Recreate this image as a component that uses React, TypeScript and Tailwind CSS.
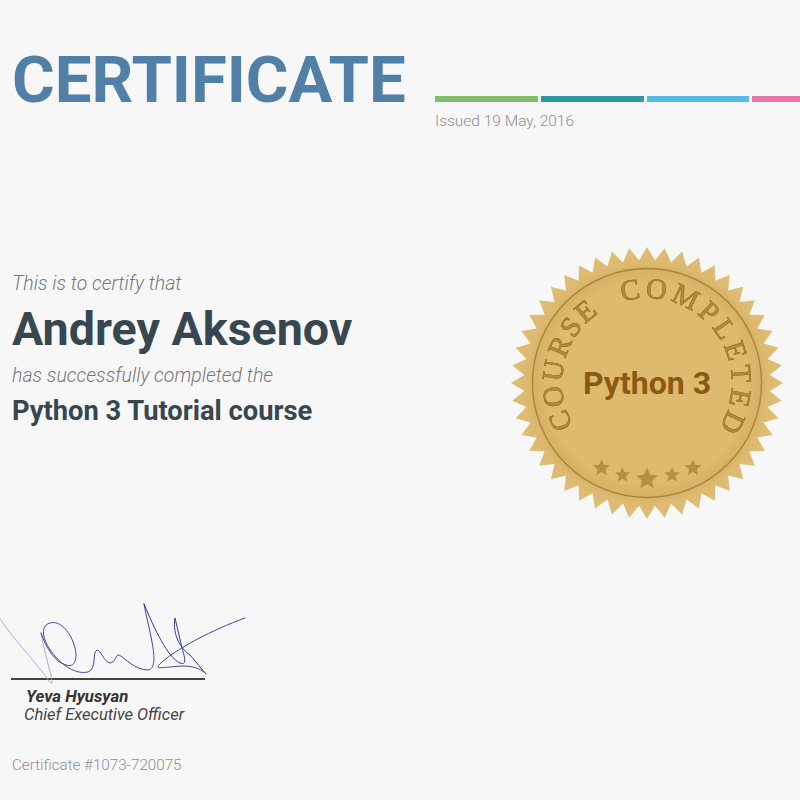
const sealPoints = () => {
  const teeth = 48;
  const pts: string[] = [];
  for (let i = 0; i < teeth * 2; i++) {
    const r = i % 2 === 0 ? 136 : 123;
    const a = (i * Math.PI) / teeth - Math.PI / 2;
    pts.push(`${(147 + r * Math.cos(a)).toFixed(1)},${(143 + r * Math.sin(a)).toFixed(1)}`);
  }
  return pts.join(" ");
};

const starPoints = (cx: number, cy: number, r: number) => {
  const pts: string[] = [];
  for (let i = 0; i < 10; i++) {
    const rad = i % 2 === 0 ? r : r * 0.46;
    const a = (i * Math.PI) / 5 - Math.PI / 2;
    pts.push(`${(cx + rad * Math.cos(a)).toFixed(1)},${(cy + rad * Math.sin(a)).toFixed(1)}`);
  }
  return pts.join(" ");
};

const stars = [
  { x: 101.5, y: 228, r: 9 },
  { x: 122.5, y: 235, r: 8 },
  { x: 147, y: 239, r: 11.5 },
  { x: 172, y: 235, r: 8 },
  { x: 193, y: 228, r: 9 },
];

const Seal = () => (
  <svg viewBox="0 0 300 290" className="w-[300px] h-[290px] shrink-0">
    <defs>
      <radialGradient id="sealFill" cx="147" cy="143" r="136" gradientUnits="userSpaceOnUse">
        <stop offset="0" stopColor="#deba6e" />
        <stop offset="0.74" stopColor="#deba6e" />
        <stop offset="0.84" stopColor="#d5b166" />
        <stop offset="0.88" stopColor="#dcb96f" />
        <stop offset="1" stopColor="#e0be76" />
      </radialGradient>
      <path id="arcLeft" d="M 73.4 185.5 A 85 85 0 0 1 147 58" fill="none" />
      <path id="arcRight" d="M 122.1 61.7 A 85 85 0 0 1 201.6 208" fill="none" />
    </defs>
    <polygon points={sealPoints()} fill="url(#sealFill)" />
    <circle cx="147" cy="143" r="114.5" fill="none" stroke="#a9842f" strokeWidth="1.3" />
    <g
      fontFamily="'Liberation Serif', serif"
      fontSize="29"
      fill="#b08c38"
      stroke="#94722a"
      strokeWidth="0.4"
      className="drop-shadow-[0.7px_0.7px_0_#8e6c22]"
    >
      <text letterSpacing="2.4">
        <textPath href="#arcLeft">COURSE</textPath>
      </text>
      <text letterSpacing="3.9">
        <textPath href="#arcRight">COMPLETED</textPath>
      </text>
    </g>
    <text x="147" y="153.5" textAnchor="middle" fontFamily="Roboto, sans-serif" fontWeight="700" fontSize="32" fill="#8b5a12">
      Python 3
    </text>
    {stars.map((s) => (
      <polygon key={s.x} points={starPoints(s.x, s.y, s.r)} fill="#b5913f" />
    ))}
  </svg>
);

const Signature = () => (
  <svg viewBox="0 0 260 100" className="w-[260px] h-[100px] block" fill="none" strokeLinecap="round">
    <path d="M0 29 C14 50 36 72 49 91 C53 96 52 92 51 85 C47 70 43 55 41 43" stroke="#9ea5d4" strokeWidth="0.9" />
    <path d="M41 43 C46 58 55 72 66 75 C74 78 78 70 75 58 C71 42 60 30 50 33 C43 35 42 42 45 50 C50 64 70 86 88 82 C97 79 92 62 97 60 C101 60 104 72 110 73 C115 73 116 64 119 65 C125 68 135 80 148 80 C155 79 155 68 152 52 C150 40 146 26 144 14" stroke="#44479e" strokeWidth="1" />
    <path d="M144 14 C154 38 168 68 180 73 C187 76 185 68 182 58 C180 48 177 38 175 28 C172 46 182 60 190 65 L206 84" stroke="#34378f" strokeWidth="1" />
    <path d="M245 28 C212 40 178 58 162 72 C154 79 158 78 170 77 C186 75 196 76 204 82" stroke="#44479e" strokeWidth="1" />
  </svg>
);

export default function App() {
  return (
    <div className="w-[800px] h-[800px] overflow-hidden bg-[#f7f7f7] font-[Roboto,sans-serif] flex flex-col">
      <div className="flex items-start pt-[41px] pl-3">
        <h1 className="text-[65.3px] leading-[78px] font-bold text-[#5080a8] w-[423px] shrink-0 whitespace-nowrap">CERTIFICATE</h1>
        <div className="flex-1 pt-[55px] min-w-0">
          <div className="flex gap-[3px] w-[420px]">
            <div className="h-[6px] w-[103px] bg-[#80bd6c]" />
            <div className="h-[6px] w-[103px] bg-[#2f98a3]" />
            <div className="h-[6px] w-[103px] bg-[#58b9e5]" />
            <div className="h-[6px] w-[103px] bg-[#e878ab]" />
          </div>
          <p className="mt-[9px] text-[15.5px] leading-[20px] font-light text-[#8f8f8f]">Issued 19 May, 2016</p>
        </div>
      </div>
      <div className="flex justify-between mt-[109px]">
        <div className="pl-3 pt-[32px]">
          <p className="text-[19.5px] leading-[24px] font-light italic text-[#777]">This is to certify that</p>
          <p className="mt-[6px] text-[46.6px] leading-[54px] font-bold text-[#37474f]">Andrey Aksenov</p>
          <p className="mt-[8px] text-[19.5px] leading-[24px] font-light italic text-[#777]">has successfully completed the</p>
          <p className="mt-[8px] text-[27.3px] leading-[30px] font-bold text-[#37474f]">Python 3 Tutorial course</p>
        </div>
        <Seal />
      </div>
      <div className="mt-[60px]">
        <Signature />
        <div className="ml-[11px] h-[1.5px] w-[194px] bg-[#444] -mt-[12px]" />
        <p className="ml-[26px] mt-[7px] text-[16.8px] leading-[18px] font-bold italic text-[#333]">Yeva Hyusyan</p>
        <p className="ml-[24px] mt-0 text-[16.5px] leading-[20px] italic text-[#444]">Chief Executive Officer</p>
        <p className="ml-3 mt-[30px] text-[15.2px] leading-[20px] font-light text-[#8f8f8f]">Certificate #1073-720075</p>
      </div>
    </div>
  );
}
